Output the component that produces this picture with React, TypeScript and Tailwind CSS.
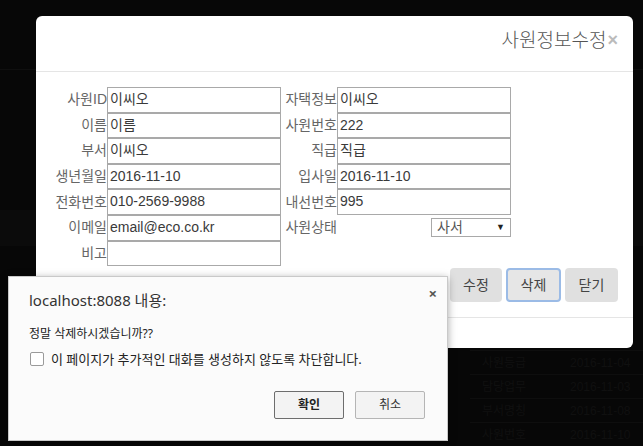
import React from 'react';

const font = { fontFamily: '"Liberation Sans", "Noto Sans CJK KR", sans-serif' };

const rows: [string, string, string | null, string | null][] = [
  ['사원ID', '이씨오', '자택정보', '이씨오'],
  ['이름', '이름', '사원번호', '222'],
  ['부서', '이씨오', '직급', '직급'],
  ['생년월일', '2016-11-10', '입사일', '2016-11-10'],
  ['전화번호', '010-2569-9988', '내선번호', '995'],
  ['이메일', 'email@eco.co.kr', '사원상태', null],
  ['비고', '', null, null],
];

const bgRows = [
  ['사원등급', '2016-11-04'],
  ['담당업무', '2016-11-03'],
  ['부서명칭', '2016-11-08'],
  ['사원번호', '2016-11-10'],
];

const Field = ({ value }: { value: string }) => (
  <div className="h-[25.6px] border border-[#a9a9a9] bg-white pl-[2px] text-[14px] leading-[23px] text-[#3a3a3a] whitespace-nowrap overflow-hidden">
    {value}
  </div>
);

const App: React.FC = () => {
  return (
    <div className="relative w-[643px] h-[446px] overflow-hidden bg-[#070707]" style={font}>
      {/* page behind the overlay */}
      <div className="flex flex-col h-full">
        <div className="h-[70px] border-b border-[#0f0f0f]" />
        <div className="h-[140px]" />
        <div className="h-[36px] bg-[#0b0b0b]" />
        <div className="flex-1 flex flex-col pt-[104px] pl-[470px]">
          {bgRows.map(([a, b], i) => (
            <div key={i} className="flex h-[24px] items-center border-t border-[#0e0e0e] text-[12px] text-[#101010]">
              <span className="w-[100px] pl-[12px]">{a}</span>
              <span>{b}</span>
            </div>
          ))}
        </div>
      </div>

      {/* modal */}
      <div className="absolute left-[36px] top-[16px] w-[597px] h-[332px] bg-white rounded-[6px] flex flex-col">
        <div className="h-[56px] border-b border-[#e5e5e5] flex items-center justify-end pr-[15px] shrink-0">
          <span className="text-[19px] leading-[20px] font-light text-[#555] mt-[-6px]">사원정보수정</span>
          <span className="text-[18px] leading-[18px] font-bold text-[#bbb] ml-[1px] mt-[-8px]">×</span>
        </div>
        <div className="pt-[15px] pl-[14px] pr-[15px] pb-[15px] border-b border-[#e5e5e5]">
          <div className="grid grid-cols-[57px_174px_56px_174px]">
            {rows.map(([l1, v1, l2, v2], i) => (
              <React.Fragment key={i}>
                <div className="h-[25.6px] flex items-center justify-end text-[14px] text-[#666] whitespace-nowrap">{l1}</div>
                <Field value={v1} />
                <div className="h-[25.6px] flex items-center justify-end text-[14px] text-[#666] whitespace-nowrap">{l2 ?? ''}</div>
                {v2 !== null ? (
                  <Field value={v2} />
                ) : l2 ? (
                  <div className="h-[25.6px] flex items-center justify-end">
                    <div className="w-[80px] h-[19px] border border-[#a9a9a9] bg-white flex items-center justify-between pl-[5px] pr-[5px] text-[14px] leading-[17px] text-[#555]">
                      <span>사서</span>
                      <span className="text-[9px] text-[#222]">▼</span>
                    </div>
                  </div>
                ) : (
                  <div />
                )}
              </React.Fragment>
            ))}
          </div>
          <div className="flex justify-end gap-[4px] mt-[2px]">
            <button className="w-[52px] h-[34px] rounded-[4px] bg-[#e0e0e0] text-[14px] text-[#444]">수정</button>
            <button className="w-[55px] h-[34px] rounded-[4px] bg-[#e6e6e6] border-2 border-[#9bbbe6] text-[14px] text-[#444]">삭제</button>
            <button className="w-[53px] h-[34px] rounded-[4px] bg-[#e0e0e0] text-[14px] text-[#444]">닫기</button>
          </div>
        </div>
        <div className="flex-1" />
      </div>

      {/* browser alert */}
      <div
        className="absolute left-[8px] top-[276px] w-[440px] h-[165px] bg-[#fbfbfb] border border-[#c9c9c9] shadow-[0_2px_8px_rgba(0,0,0,0.35)] flex flex-col pl-[20px] pr-[22px] pt-[10px]"
        style={{ fontFamily: '"Noto Sans", "Noto Sans CJK KR", sans-serif' }}
      >
        <div className="flex justify-between items-start">
          <span className="text-[15px] leading-[22px] text-[#333] mt-[2px]">localhost:8088 내용:</span>
          <span className="text-[15px] leading-[15px] font-bold text-[#555] mr-[-12px] mt-[-1px]">×</span>
        </div>
        <div className="mt-[15px] text-[12px] leading-[16px] text-[#222]">정말 삭제하시겠습니까??</div>
        <div className="mt-[9px] flex items-center gap-[7px]">
          <span className="w-[14px] h-[14px] border border-[#9a9a9a] rounded-[2px] bg-white ml-[1px]" />
          <span className="text-[13px] leading-[16px] text-[#222]">이 페이지가 추가적인 대화를 생성하지 않도록 차단합니다.</span>
        </div>
        <div className="flex justify-end gap-[11px] mt-[24px]">
          <button className="w-[70px] h-[28px] border border-[#6d6d6d] rounded-[2px] bg-[#f3f3f3] text-[12px] font-bold text-[#222]">확인</button>
          <button className="w-[70px] h-[28px] border border-[#b5b5b5] rounded-[2px] bg-[#f3f3f3] text-[12px] text-[#333]">취소</button>
        </div>
      </div>
    </div>
  );
};

export default App;
